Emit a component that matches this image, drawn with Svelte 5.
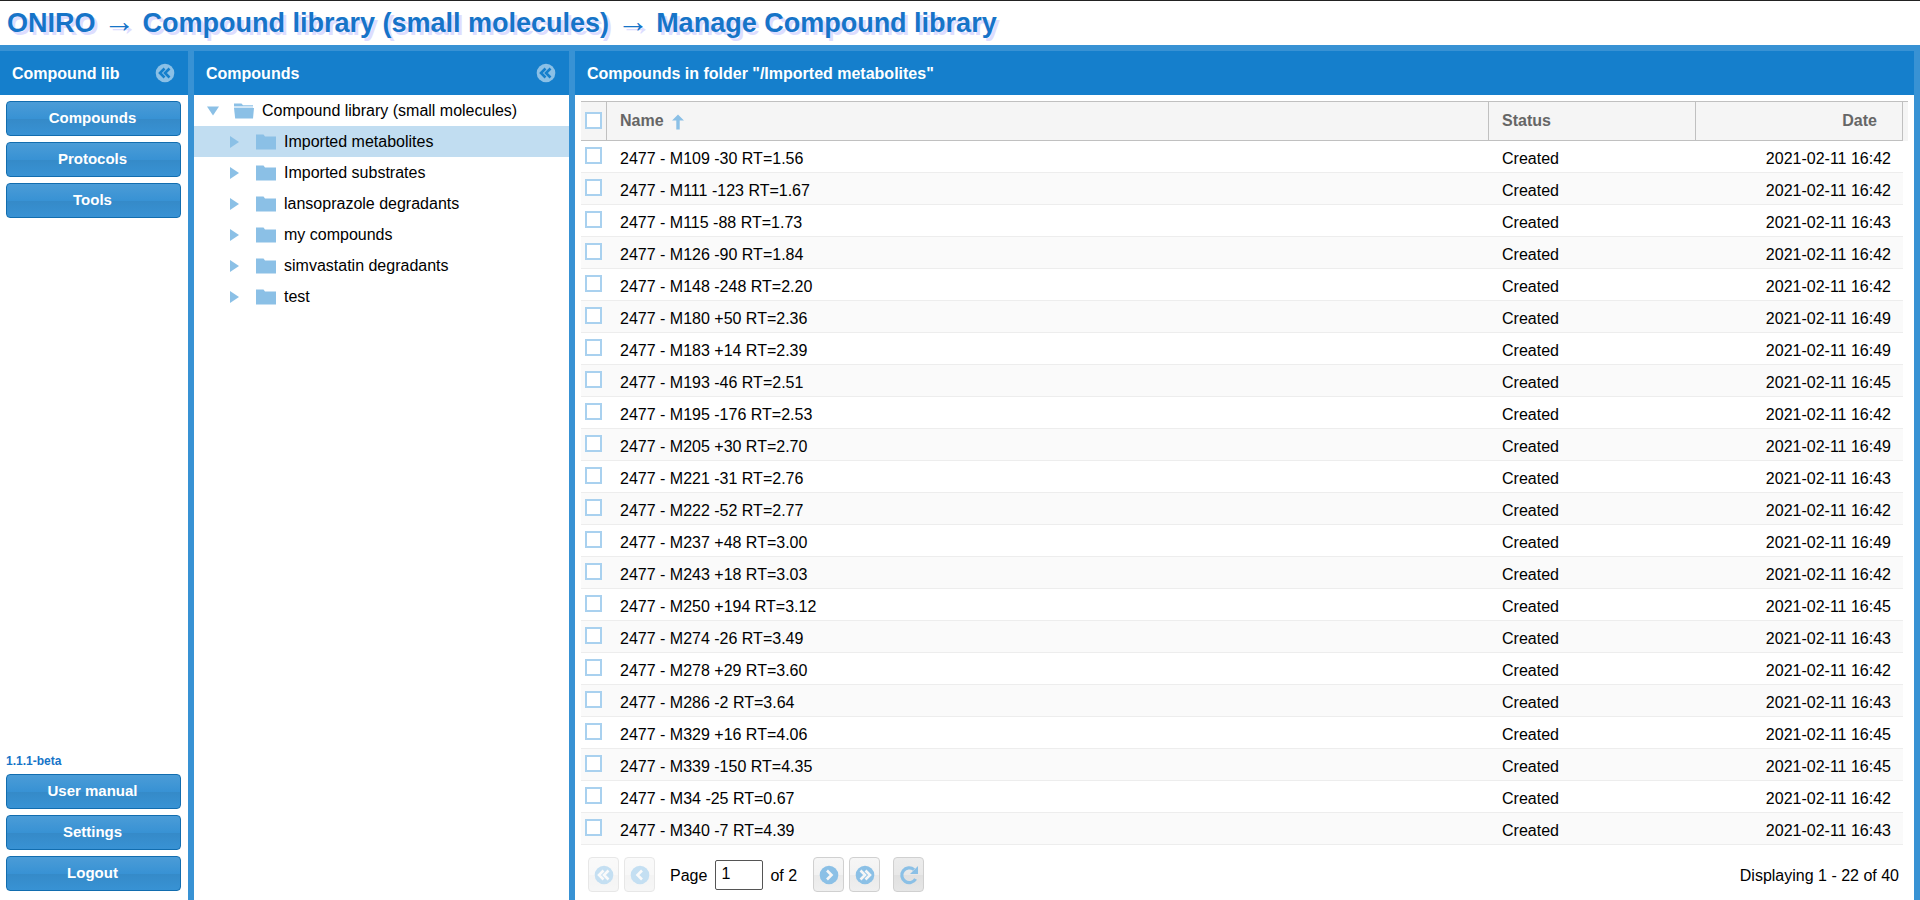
<script lang="ts">
	const sections = ['Compounds', 'Protocols', 'Tools'];
	const links = ['User manual', 'Settings', 'Logout'];
	const root = 'Compound library (small molecules)';
	const folders = [
		'Imported metabolites',
		'Imported substrates',
		'lansoprazole degradants',
		'my compounds',
		'simvastatin degradants',
		'test'
	];

	// name, time of creation on 2021-02-11
	const compounds: [string, string][] = [
		['M109 -30 RT=1.56', '16:42'],
		['M111 -123 RT=1.67', '16:42'],
		['M115 -88 RT=1.73', '16:43'],
		['M126 -90 RT=1.84', '16:42'],
		['M148 -248 RT=2.20', '16:42'],
		['M180 +50 RT=2.36', '16:49'],
		['M183 +14 RT=2.39', '16:49'],
		['M193 -46 RT=2.51', '16:45'],
		['M195 -176 RT=2.53', '16:42'],
		['M205 +30 RT=2.70', '16:49'],
		['M221 -31 RT=2.76', '16:43'],
		['M222 -52 RT=2.77', '16:42'],
		['M237 +48 RT=3.00', '16:49'],
		['M243 +18 RT=3.03', '16:42'],
		['M250 +194 RT=3.12', '16:45'],
		['M274 -26 RT=3.49', '16:43'],
		['M278 +29 RT=3.60', '16:42'],
		['M286 -2 RT=3.64', '16:43'],
		['M329 +16 RT=4.06', '16:45'],
		['M339 -150 RT=4.35', '16:45'],
		['M34 -25 RT=0.67', '16:42'],
		['M340 -7 RT=4.39', '16:43']
	];

	let selected = $state('Imported metabolites');
	let page = $state('1');
	let checked: boolean[] = $state(compounds.map(() => false));

	function toggleAll(e: Event) {
		const on = (e.currentTarget as HTMLInputElement).checked;
		checked = compounds.map(() => on);
	}
</script>

<svelte:head>
	<title>ONIRO</title>
</svelte:head>

{#snippet circle(path: string, mark: string)}
	<svg class="circle" viewBox="0 0 20 20" width="20" height="20" aria-hidden="true">
		<circle cx="10" cy="10" r="9.3" fill="#8bc0e6" />
		<path d={path} fill="none" stroke={mark} stroke-width="2.6" />
	</svg>
{/snippet}

<div class="app">
	<h1>
		ONIRO <span>→</span> Compound library (small molecules) <span>→</span> Manage Compound library
	</h1>

	<div class="panels">
		<nav class="panel side">
			<header>
				<h2>Compound lib</h2>
				<button class="collapse" aria-label="Collapse menu">
					{@render circle('M9.5 5.5 L5 10 L9.5 14.5 M14.5 5.5 L10 10 L14.5 14.5', '#157fcc')}
				</button>
			</header>
			<div class="buttons">
				{#each sections as label}
					<button class="blue">{label}</button>
				{/each}
			</div>
			<div class="buttons bottom">
				<small>1.1.1-beta</small>
				{#each links as label}
					<button class="blue">{label}</button>
				{/each}
			</div>
		</nav>

		<section class="panel folders">
			<header>
				<h2>Compounds</h2>
				<button class="collapse" aria-label="Collapse folders">
					{@render circle('M9.5 5.5 L5 10 L9.5 14.5 M14.5 5.5 L10 10 L14.5 14.5', '#157fcc')}
				</button>
			</header>
			<ul>
				<li>
					<button class="node">
						<svg class="arrow" viewBox="0 0 12 12" width="12" height="12">
							<path d="M0 1.5 H12 L6 10.5 Z" fill="#8bc0e6" />
						</svg>
						<svg class="folder" viewBox="0 0 20 16" width="20" height="16">
							<path d="M0 0.5 H7.5 L9 2.2 H19 V3.4 H0 Z" fill="#8bc0e6" />
							<path d="M0 5 H20 L19 15.5 H1.2 Z" fill="#8bc0e6" />
							<path d="M0 3.4 H19 V5 H0 Z" fill="#d3e7f6" />
						</svg>
						{root}
					</button>
				</li>
				{#each folders as folder}
					<li>
						<button
							class="node child"
							class:selected={folder === selected}
							onclick={() => (selected = folder)}
						>
							<svg class="arrow" viewBox="0 0 12 12" width="12" height="12">
								<path d="M1 0 L10 6 L1 12 Z" fill="#8bc0e6" />
							</svg>
							<svg class="folder" viewBox="0 0 20 16" width="20" height="16">
								<path d="M0 0.5 H7.5 L9 2.5 H20 V15.5 H0 Z" fill="#8bc0e6" />
							</svg>
							{folder}
						</button>
					</li>
				{/each}
			</ul>
		</section>

		<main class="panel">
			<header>
				<h2>Compounds in folder "/{selected}"</h2>
			</header>
			<div class="grid">
				<table>
					<colgroup>
						<col class="c-check" />
						<col />
						<col class="c-status" />
						<col class="c-date" />
						<col class="c-scroll" />
					</colgroup>
					<thead>
						<tr>
							<th><input type="checkbox" aria-label="Select all" onchange={toggleAll} /></th>
							<th>
								Name
								<svg class="sort" viewBox="0 0 12 16" width="12" height="16">
									<path d="M6 0.5 L12 6.5 H7.7 V15.5 H4.3 V6.5 H0 Z" fill="#8bc0e6" />
								</svg>
							</th>
							<th>Status</th>
							<th class="date">Date</th>
							<td></td>
						</tr>
					</thead>
					<tbody>
						{#each compounds as [name, time], i}
							<tr>
								<td><input type="checkbox" aria-label="Select {name}" bind:checked={checked[i]} /></td>
								<td>2477 - {name}</td>
								<td>Created</td>
								<td class="date">2021-02-11 {time}</td>
							</tr>
						{/each}
					</tbody>
				</table>
			</div>
			<footer>
				<button class="tool" disabled aria-label="First page">
					{@render circle('M9.5 5.5 L5 10 L9.5 14.5 M14.5 5.5 L10 10 L14.5 14.5', '#f6f6f6')}
				</button>
				<button class="tool" disabled aria-label="Previous page">
					{@render circle('M12 5.5 L7.5 10 L12 14.5', '#f6f6f6')}
				</button>
				<label for="page">Page</label>
				<input id="page" type="text" bind:value={page} />
				<span class="of">of 2</span>
				<button class="tool" aria-label="Next page">
					{@render circle('M8 5.5 L12.5 10 L8 14.5', '#f6f6f6')}
				</button>
				<button class="tool" aria-label="Last page">
					{@render circle('M5.5 5.5 L10 10 L5.5 14.5 M10.5 5.5 L15 10 L10.5 14.5', '#f6f6f6')}
				</button>
				<button class="tool refresh" aria-label="Refresh">
					<svg class="circle" viewBox="0 0 20 20" width="20" height="20">
						<path d="M15 4.6 A7.4 7.4 0 1 0 16.6 14" fill="none" stroke="#8bc0e6" stroke-width="3.2" />
						<path d="M19 1 V9 H11 Z" fill="#8bc0e6" />
					</svg>
				</button>
				<span class="total">Displaying 1 - 22 of 40</span>
			</footer>
		</main>
	</div>
</div>

<style>
	:global(body) {
		background: #fff;
	}

	.app {
		display: flex;
		flex-direction: column;
		min-height: 100vh;
		box-sizing: border-box;
		border-top: 1px solid #222;
		font: 16px/18px 'Liberation Sans', Arial, sans-serif;
		color: #000;
	}

	h1 {
		height: 44px;
		box-sizing: border-box;
		margin: 0;
		padding: 4px 7px 8px;
		font-size: 27px;
		line-height: 32px;
		color: #1674c8;
		text-shadow: 3px 3px #ddf;
		white-space: nowrap;
	}

	h1 span {
		font-family: 'Liberation Serif', serif;
		font-size: 32px;
		font-weight: normal;
		line-height: 1;
	}

	.panels {
		flex: 1;
		display: grid;
		grid-template-columns: 188px 375px minmax(0, 1fr);
		gap: 6px;
		padding: 6px 6px 0 0;
		background: #3892d4;
	}

	.panel {
		display: flex;
		flex-direction: column;
		background: #fff;
	}

	header {
		display: flex;
		align-items: center;
		justify-content: space-between;
		height: 44px;
		padding: 0 13px 0 12px;
		background: #157fcc;
		color: #fff;
	}

	h2 {
		margin: 0;
		padding-top: 2px;
		font-size: 16px;
	}

	button {
		font: inherit;
		cursor: pointer;
	}

	.collapse {
		padding: 0;
		border: none;
		background: none;
	}

	.circle {
		display: block;
	}

	.buttons {
		display: flex;
		flex-direction: column;
		gap: 6px;
		padding: 6px 7px 0 6px;
	}

	.bottom {
		margin-top: auto;
		padding-bottom: 9px;
	}

	.blue {
		height: 35px;
		padding: 0 2px 2px 0;
		border: 1px solid #126daf;
		border-radius: 4px;
		background: linear-gradient(#4b9cd7, #3892d4 50%, #358ac8 51%, #3892d4);
		color: #fff;
		font-size: 15px;
		font-weight: bold;
	}

	small {
		font-size: 12px;
		font-weight: bold;
		line-height: 14px;
		color: #1674c8;
	}

	ul {
		margin: 0;
		padding: 0;
		list-style: none;
	}

	.node {
		display: flex;
		align-items: center;
		width: 100%;
		height: 31px;
		padding: 0 13px;
		border: none;
		background: none;
		color: #000;
	}

	.node.child {
		padding-left: 35px;
	}

	.node.selected {
		background: #c1ddf1;
	}

	.arrow {
		margin-right: 15px;
	}

	.folder {
		margin-right: 8px;
	}

	.grid {
		padding: 6px 6px 0;
	}

	table {
		width: 100%;
		border-collapse: separate;
		border-spacing: 0;
		table-layout: fixed;
	}

	.c-check {
		width: 26px;
	}

	.c-status,
	.c-date {
		width: 207px;
	}

	.c-scroll {
		width: 5px;
	}

	thead tr > * {
		height: 40px;
		box-sizing: border-box;
		border-top: 1px solid #c0c0c0;
		background: #f5f5f5;
	}

	th {
		padding: 0 13px;
		border-right: 1px solid #c0c0c0;
		border-bottom: 1px solid #c0c0c0;
		color: #666;
		text-align: left;
	}

	th.date {
		padding-right: 25px;
	}

	tbody td {
		height: 32px;
		box-sizing: border-box;
		padding: 4px 12px 0 13px;
		border-bottom: 1px solid #ededed;
	}

	tbody tr:nth-child(even) td {
		background: #fafafa;
	}

	tr > :first-child {
		padding: 0 0 2px 4px;
	}

	.date {
		text-align: right;
	}

	.sort {
		margin-left: 4px;
		vertical-align: -4px;
	}

	input[type='checkbox'] {
		appearance: none;
		display: block;
		width: 17px;
		height: 17px;
		margin: 0;
		border: 2px solid #a9d1ef;
		background: #fff;
	}

	input[type='checkbox']:checked {
		background: #3892d4;
		box-shadow: inset 0 0 0 2px #fff;
	}

	footer {
		display: flex;
		align-items: center;
		gap: 5px;
		padding: 12px 15px 8px 13px;
	}

	.tool {
		display: flex;
		align-items: center;
		justify-content: center;
		width: 31px;
		height: 35px;
		padding: 0;
		border: 1px solid #d0d0d0;
		border-radius: 4px;
		background: linear-gradient(#f6f6f6, #f2f2f2 50%, #eaeaea 51%, #efefef);
	}

	.tool:disabled {
		opacity: 0.5;
		cursor: default;
	}

	label,
	.of,
	.total {
		padding-top: 2px;
	}

	label {
		margin: 0 3px 0 10px;
	}

	#page {
		box-sizing: border-box;
		width: 48px;
		height: 30px;
		padding: 0 5px 2px;
		border: 1px solid #555;
		border-radius: 2px;
		font: inherit;
	}

	.of {
		margin: 0 11px 0 2px;
	}

	.refresh {
		margin-left: 8px;
		background: linear-gradient(#ececec, #e8e8e8 50%, #e0e0e0 51%, #e6e6e6);
	}

	.total {
		margin-left: auto;
	}
</style>
